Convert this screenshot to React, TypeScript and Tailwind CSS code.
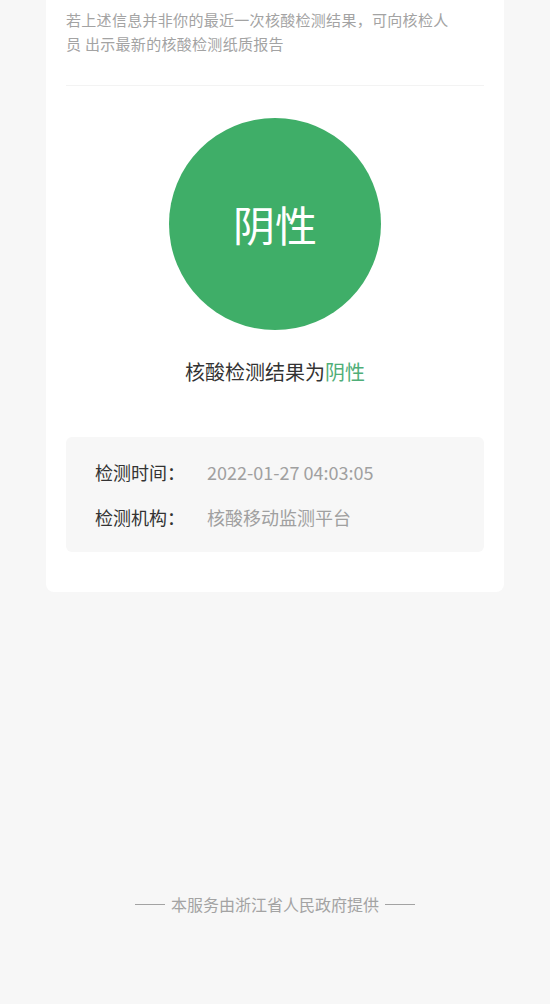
export default function App() {
  return (
    <div
      className="flex h-[1004px] flex-col overflow-hidden bg-[#f7f7f7]"
      style={{ fontFamily: '"Noto Sans CJK SC", "Noto Sans", sans-serif' }}
    >
      <div className="mx-[46px] -mt-[12px] rounded-lg bg-white px-[20px] pb-[40px] pt-[20px]">
        <p className="w-[390px] text-[15px] leading-[24px] tracking-[0.3px] text-[#a3a3a3]">
          若上述信息并非你的最近一次核酸检测结果，可向核检人员 出示最新的核酸检测纸质报告
        </p>
        <div className="mt-[29px] h-px bg-[#f3f3f3]" />

        <div className="mt-[32px] flex justify-center">
          <div className="flex h-[212px] w-[212px] items-center justify-center rounded-full bg-[#3fae68]">
            <span className="text-[42px] leading-none text-white">阴性</span>
          </div>
        </div>

        <p className="mt-[28px] text-center text-[20px] leading-[28px] text-[#333]">
          核酸检测结果为<span className="text-[#4fae78]">阴性</span>
        </p>

        <div className="mt-[51px] rounded-md bg-[#f7f7f7] px-[29px] py-[22px]">
          <div className="flex text-[18px] leading-[26px]">
            <span className="w-[112px] text-[#333]">检测时间：</span>
            <span className="text-[#a0a0a0]">2022-01-27 04:03:05</span>
          </div>
          <div className="mt-[19px] flex text-[18px] leading-[26px]">
            <span className="w-[112px] text-[#333]">检测机构：</span>
            <span className="text-[#a0a0a0]">核酸移动监测平台</span>
          </div>
        </div>
      </div>

      <div className="mt-[300px] flex items-center justify-center gap-[6px] text-[16px] leading-[24px] text-[#a3a3a3]">
        <span className="h-px w-[30px] bg-[#a3a3a3]" />
        <span>本服务由浙江省人民政府提供</span>
        <span className="h-px w-[30px] bg-[#a3a3a3]" />
      </div>
    </div>
  );
}
